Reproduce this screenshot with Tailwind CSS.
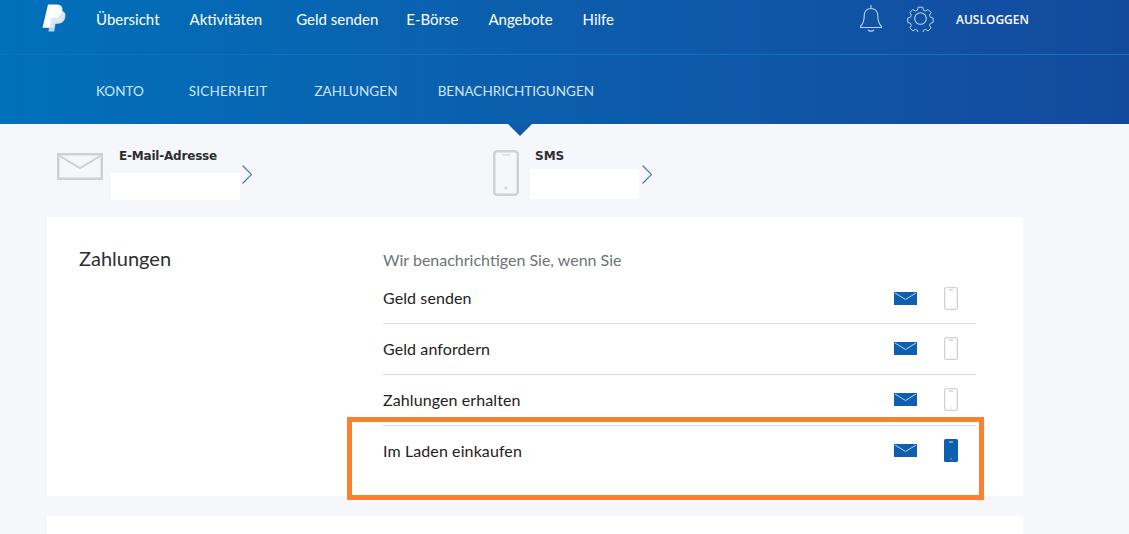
<!DOCTYPE html>
<html lang="de">
<head>
<meta charset="utf-8">
<script src="https://cdn.jsdelivr.net/npm/@tailwindcss/browser@4"></script>
</head>
<body class="bg-[#f5f7fa] font-['Lato','Noto_Sans',sans-serif] overflow-hidden">
<div class="relative w-[1129px] h-[534px] overflow-hidden">
  <header class="relative h-[124px] bg-gradient-to-r from-[#0070ba] to-[#134a9e]">
    <div class="h-[55px] border-b border-[#0f6fc0] flex pl-[42px] relative">
      <svg class="w-[24px] h-[28px] mt-[4px] shrink-0" viewBox="0 0 24 28">
        <path fill="#b9d3ee" d="M9 7h10c3.500 0 5 2.500 4.400 6-.8 4.400-3.600 6.600-7.800 6.600h-2l-1.100 6.600-.2 1.300H6.500z"/>
        <path fill="#ffffff" d="M6 .5h8.500c4.200 0 6.500 2.200 5.800 6.300-.8 5-4 7.700-8.800 7.700H9.300L7.900 23.800H.5z"/>
        <path fill="#dbe8f6" d="M8.100 23.800l1.200-9.300h2.200c4.800 0 8-2.700 8.800-7.700 1.700 1 2.600 2.800 2.200 5.600-.7 4.400-3.700 7-7.900 7h-2.400l-.9 4.400z"/>
      </svg>
      <nav class="flex ml-[30px] pt-[10px] text-[15px] leading-[18px] text-white">
        <a>Übersicht</a><a class="ml-[30px]">Aktivitäten</a><a class="ml-[34px]">Geld senden</a><a class="ml-[28px]">E-Börse</a><a class="ml-[30px]">Angebote</a><a class="ml-[30px]">Hilfe</a>
      </nav>
      <div class="flex ml-[245px] text-white">
        <svg class="w-[24px] h-[28px] mt-[4px]" viewBox="0 0 24 28" fill="none" stroke="#b9d4f2" stroke-width="1.100">
          <path d="M12 1v3.500M12 4.500c-4.500 0-6.800 3.300-6.800 7.500 0 4.500-.7 7.500-3.700 10.500v1h21v-1c-3-3-3.700-6-3.700-10.500 0-4.200-2.300-7.500-6.800-7.500z"/>
          <path d="M9 26c1.500 1.500 4.500 1.500 6 0"/>
        </svg>
        <svg class="w-[27px] h-[27px] mt-[5px] ml-[24px]" viewBox="0 0 27 27" fill="none" stroke="#b9d4f2" stroke-width="1.100">
          <circle cx="13.500" cy="13.500" r="5.800"/>
          <path d="M11 1h5l.8 3.300 2.300 1 2.900-1.700 3.300 3.400-1.700 2.800 1 2.400 3 .8v5l-3 .8-1 2.400 1.700 2.800-3.300 3.400-2.900-1.700-2.300 1-.8 3.300h-5l-.8-3.300-2.300-1-2.900 1.700-3.300-3.400 1.700-2.800-1-2.400-3-.8v-5l3-.8 1-2.400-1.700-2.800 3.300-3.400 2.900 1.700 2.300-1z" transform="translate(1.300 1.300) scale(.9)"/>
        </svg>
        <span class="ml-[22px] pt-[12px] leading-[15px] font-semibold font-['Open_Sans',sans-serif] text-[12px]">AUSLOGGEN</span>
      </div>
    </div>
    <nav class="flex pl-[96px] pt-[27px] text-[13.500px] leading-[18px] text-[#d3e4f7]">
      <a>KONTO</a><a class="ml-[45px] tracking-[0.2px]">SICHERHEIT</a><a class="ml-[47px] tracking-[0.1px]">ZAHLUNGEN</a><a class="ml-[40px]">BENACHRICHTIGUNGEN</a>
    </nav>
    <div class="absolute left-[508px] top-[124px] w-0 h-0 border-x-[12.500px] border-x-transparent border-t-[12px] border-t-[#0f5aab]"></div>
  </header>

  <section class="flex h-[93px] pl-[57px]">
    <div class="flex w-[437px]">
      <svg class="w-[46px] h-[27px] mt-[29px] shrink-0" viewBox="0 0 46 27" fill="none" stroke="#cfd1d3" stroke-width="2.500">
        <rect x="1.200" y="1.200" width="43.600" height="24.600"/>
        <path d="M1 2l22 13L45 2" stroke-width="2"/>
      </svg>
      <div class="ml-[8px] w-[129px] pt-[25px]">
        <div class="pl-[8px] text-[12px] leading-[15px] font-bold font-['DejaVu_Sans',sans-serif] text-[#2c2e2f] whitespace-nowrap tracking-[-0.2px]">E-Mail-Adresse</div>
        <div class="h-[27px] bg-white mt-[9px]"></div>
      </div>
      <svg class="w-[10px] h-[19px] mt-[41px] ml-[2px]" viewBox="0 0 10 19" fill="none" stroke="#4a7bb5" stroke-width="1.200"><path d="M.5.5l9 9-9 9"/></svg>
    </div>
    <div class="flex -ml-[1px]">
      <svg class="w-[26px] h-[46px] mt-[26px] shrink-0" viewBox="0 0 26 46" fill="none" stroke="#cfd1d3" stroke-width="2.500">
        <rect x="1.200" y="1.200" width="23.600" height="43.600" rx="3"/>
        <path d="M9 5h8" stroke-width="1"/>
        <circle cx="13" cy="38" r="1.500" fill="#cfd1d3" stroke="none"/>
      </svg>
      <div class="ml-[11px] w-[109px] pt-[25px]">
        <div class="pl-[5px] text-[12px] leading-[15px] font-bold font-['DejaVu_Sans',sans-serif] text-[#2c2e2f]">SMS</div>
        <div class="h-[30px] bg-white mt-[5px]"></div>
      </div>
      <svg class="w-[10px] h-[19px] mt-[41px] ml-[3px]" viewBox="0 0 10 19" fill="none" stroke="#4a7bb5" stroke-width="1.200"><path d="M.5.5l9 9-9 9"/></svg>
    </div>
  </section>

  <main class="ml-[47px] w-[976px] h-[279px] bg-white flex">
    <h2 class="w-[336px] pl-[32px] pt-[29px] text-[20px] leading-[24px] text-[#2c2e2f] font-normal">Zahlungen</h2>
    <div class="w-[593px] pt-[33px]">
      <p class="text-[16px] leading-[20px] text-[#6c7378]">Wir benachrichtigen Sie, wenn Sie</p>
      <ul class="text-[16px] text-[#1f2122] tracking-[0.1px]">
        <li class="h-[51px] mt-[3px] pb-[2px] flex items-center border-b border-[#d9dbdc] pt-[2px]">
          <span class="flex-1 -mt-[1px]">Geld senden</span>
          <svg class="w-[23px] h-[13px]" viewBox="0 0 23 13"><rect width="23" height="13" fill="#0f5fb0"/><path d="M1 1l10.500 6.500L22 1" fill="none" stroke="#bcd7f2"/></svg>
          <svg class="w-[14px] h-[23px] ml-[27px] mr-[18px]" viewBox="0 0 14 23" fill="none" stroke="#cfd1d6" stroke-width="1.300"><rect x=".65" y=".65" width="12.700" height="21.700" rx="1.500"/><path d="M5 3h4M6.500 20h1"/></svg>
        </li>
        <li class="h-[51px] pb-[2px] flex items-center border-b border-[#d9dbdc]">
          <span class="flex-1 mt-[1px]">Geld anfordern</span>
          <svg class="w-[23px] h-[13px]" viewBox="0 0 23 13"><rect width="23" height="13" fill="#0f5fb0"/><path d="M1 1l10.500 6.500L22 1" fill="none" stroke="#bcd7f2"/></svg>
          <svg class="w-[14px] h-[23px] ml-[27px] mr-[18px]" viewBox="0 0 14 23" fill="none" stroke="#cfd1d6" stroke-width="1.300"><rect x=".65" y=".65" width="12.700" height="21.700" rx="1.500"/><path d="M5 3h4M6.500 20h1"/></svg>
        </li>
        <li class="h-[51px] pb-[2px] flex items-center border-b border-[#d9dbdc]">
          <span class="flex-1 mt-[1px]">Zahlungen erhalten</span>
          <svg class="w-[23px] h-[13px]" viewBox="0 0 23 13"><rect width="23" height="13" fill="#0f5fb0"/><path d="M1 1l10.500 6.500L22 1" fill="none" stroke="#bcd7f2"/></svg>
          <svg class="w-[14px] h-[23px] ml-[27px] mr-[18px]" viewBox="0 0 14 23" fill="none" stroke="#cfd1d6" stroke-width="1.300"><rect x=".65" y=".65" width="12.700" height="21.700" rx="1.500"/><path d="M5 3h4M6.500 20h1"/></svg>
        </li>
        <li class="h-[51px] pb-[2px] flex items-center">
          <span class="flex-1">Im Laden einkaufen</span>
          <svg class="w-[23px] h-[13px]" viewBox="0 0 23 13"><rect width="23" height="13" fill="#0f5fb0"/><path d="M1 1l10.500 6.500L22 1" fill="none" stroke="#bcd7f2"/></svg>
          <svg class="w-[14px] h-[23px] ml-[27px] mr-[18px]" viewBox="0 0 14 23"><rect width="14" height="23" rx="1.500" fill="#0f5fb0"/><path d="M5 3h4M6.500 20h1" stroke="#d5e5f5"/></svg>
        </li>
      </ul>
    </div>
  </main>
  <div class="ml-[47px] mt-[20px] w-[976px] h-[60px] bg-white"></div>
  <div class="absolute left-[347px] top-[417px] w-[637px] h-[83px] border-[5px] border-[#fb8131]"></div>
</div>
</body>
</html>
